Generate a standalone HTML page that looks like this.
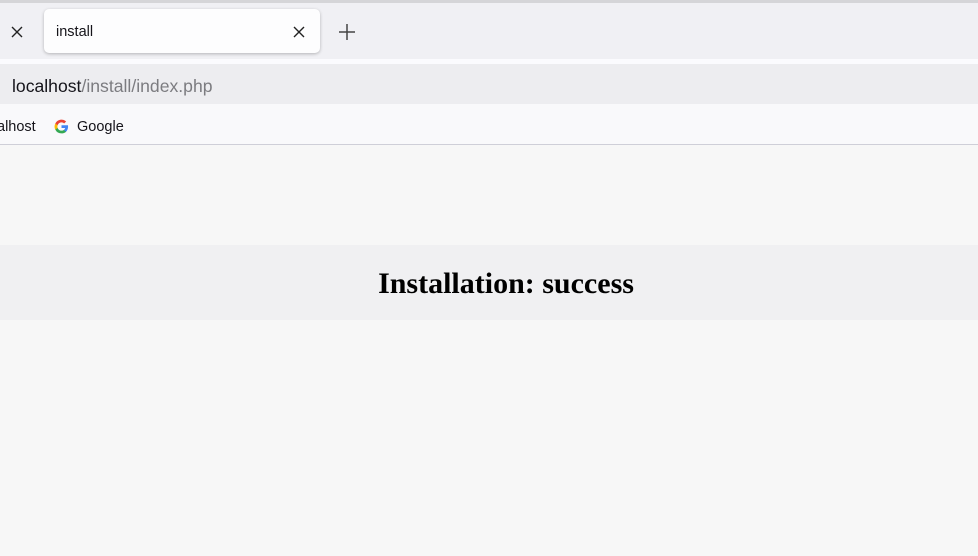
<!DOCTYPE html>
<html><head><style>
body{margin:0;width:978px;height:556px;background:#f7f7f7;font-family:"Liberation Sans",sans-serif;position:relative;overflow:hidden}
.top{position:absolute;left:0;top:0;width:978px;height:3px;background:#d5d5d8}
.strip{position:absolute;left:0;top:3px;width:978px;height:56px;background:#f0f0f4}
.gap{position:absolute;left:0;top:59px;width:978px;height:5px;background:#fbfbfe}
.tab{position:absolute;left:44px;top:9px;width:276px;height:44px;background:#fdfdfe;border-radius:5px;box-shadow:0 1px 3px rgba(0,0,0,.25)}
.url{position:absolute;left:0;top:64px;width:978px;height:40px;background:#ededf0}
.bm{position:absolute;left:0;top:104px;width:978px;height:40px;background:#f9f9fb;border-bottom:1px solid #cfcfd8}
.t{position:absolute;font-size:14.5px;color:#15141a}
.banner{position:absolute;left:0;top:245px;width:978px;height:75px;background:#f0f0f2}
h1{position:absolute;left:0;width:1012px;top:267px;margin:0;text-align:center;font:bold 30px "Liberation Serif",serif;color:#000}
</style></head><body>
<div class="top"></div><div class="strip"></div><div class="gap"></div>
<svg style="position:absolute;left:11px;top:26px" width="12" height="12"><path d="M1 1L11 11M11 1L1 11" stroke="#222" stroke-width="1.4"/></svg>
<div class="tab"></div>
<div class="t" style="left:56px;top:24px;font-size:14.5px">install</div>
<svg style="position:absolute;left:293px;top:26px" width="12" height="12"><path d="M1 1L11 11M11 1L1 11" stroke="#222" stroke-width="1.4"/></svg>
<svg style="position:absolute;left:339px;top:24px" width="16" height="16"><path d="M8 0V16M0 8H16" stroke="#444" stroke-width="1.5"/></svg>
<div class="url"></div>
<div class="t" style="left:12px;top:76px;font-size:17.6px">localhost<span style="color:#7c7c80">/install/index.php</span></div>
<div class="bm"></div>
<div class="t" style="left:-3px;top:119px">alhost</div>
<svg style="position:absolute;left:54px;top:119px" width="15" height="15" viewBox="0 0 24 24"><path d="M22.5 12.2c0-.8-.1-1.5-.2-2.2H12v4.3h5.9a5 5 0 0 1-2.2 3.3v2.7h3.6c2-1.9 3.2-4.7 3.2-8.1z" fill="#4285F4"/><path d="M12 23c3 0 5.5-1 7.3-2.7l-3.6-2.7c-1 .7-2.2 1.1-3.7 1.1-2.9 0-5.3-1.9-6.2-4.5H2.1v2.8A11 11 0 0 0 12 23z" fill="#34A853"/><path d="M5.8 14.2a6.600 6.600 0 0 1 0-4.3V7.1H2.1a11 11 0 0 0 0 9.900z" fill="#FBBC05"/><path d="M12 5.4c1.600 0 3.100.6 4.200 1.700l3.200-3.200A11 11 0 0 0 2.100 7.100l3.700 2.800C6.700 7.300 9.100 5.400 12 5.400z" fill="#EA4335"/></svg>
<div class="t" style="left:77px;top:119px">Google</div>
<div class="banner"></div>
<h1>Installation: success</h1>
</body></html>
